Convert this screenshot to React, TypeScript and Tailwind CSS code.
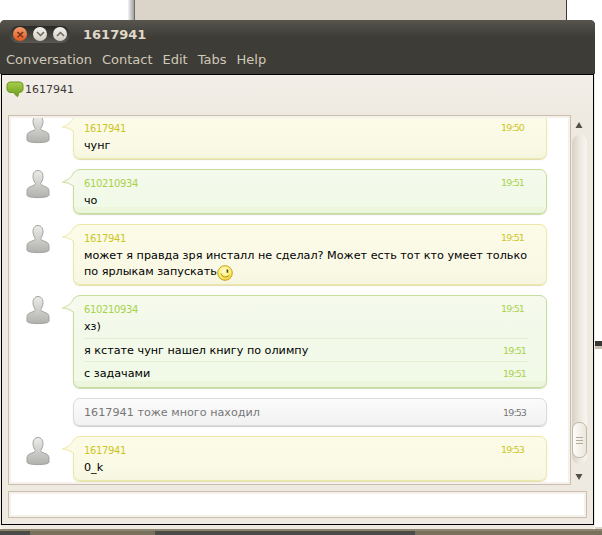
import type { ReactNode } from "react";

const sans = "font-['DejaVu_Sans',sans-serif]";

type Tone = "yellow" | "green";

const tones = {
  yellow: {
    box: "border-[#eee8a8] bg-[linear-gradient(#fbfbe8,#f9f9e6_70%,#f6f6e0)] shadow-[0_1px_1px_#e0dcae]",
    name: "text-[#cdc61f]",
    tailFill: "#fbfbe8",
    tailStroke: "#eee8a8",
  },
  green: {
    box: "border-[#c7dd9c] bg-[linear-gradient(#f5faec,#f1f9e7_calc(100%-6px),#ecf6dc_calc(100%-6px))] shadow-[0_1px_1px_#cdd8b4]",
    name: "text-[#a8d24c]",
    tailFill: "#f5faec",
    tailStroke: "#c7dd9c",
  },
};

function Avatar() {
  return (
    <svg width="26" height="30" viewBox="0 0 26 30" className="mt-px shrink-0">
      <defs>
        <linearGradient id="av" x1="0" y1="0" x2="0" y2="1">
          <stop offset="0" stopColor="#ecece9" />
          <stop offset="1" stopColor="#b0b0ac" />
        </linearGradient>
      </defs>
      <path
        d="M13 .5c3.200 0 5 2.600 5 6 0 3-1.200 5.400-2.400 7 .2 1.200 1.600 2 4 2.800 2.600.9 4.400 2 4.400 4.800V25c0 1-2 2.600-11 2.600S2 26 2 25v-3.900c0-2.800 1.800-3.900 4.400-4.800 2.400-.8 3.800-1.600 4-2.800C9.200 11.900 8 9.500 8 6.500c0-3.400 1.800-6 5-6z"
        fill="url(#av)"
        stroke="#a2a29e"
      />
    </svg>
  );
}

function Row({ tone, children }: { tone: Tone; children: ReactNode }) {
  const t = tones[tone];
  return (
    <div className="flex pl-[14px] pr-[21px]">
      <div className="w-[48px] shrink-0">
        <Avatar />
      </div>
      <div className={`relative flex-1 rounded-[7px] border pl-[10px] pr-[18px] pt-[4px] pb-[3px] ${t.box}`}>
        <svg width="13" height="20" viewBox="0 0 13 20" className="absolute left-[-12px] top-[-1px]">
          <path d="M13 2C11 7 7 11 .5 13c4 .5 8 1.500 12.500 5z" fill={t.tailFill} />
          <path d="M12 2.500C10.500 7 7 11 .5 13c4 .5 7.500 1.500 11.500 4.500" fill="none" stroke={t.tailStroke} />
        </svg>
        {children}
      </div>
    </div>
  );
}

function Line({ tone, name, time }: { tone: Tone; name: string; time: string }) {
  return (
    <div className={`flex h-[18px] items-center justify-between pr-[4px] ${tones[tone].name}`}>
      <span className="text-[10px] tracking-[-0.36px]">{name}</span>
      <span className="text-[9.5px] tracking-[-0.9px]">{time}</span>
    </div>
  );
}

function Smiley() {
  return (
    <svg width="16" height="16" viewBox="0 0 16 16" className="my-[-2px] inline-block align-[-4px]">
      <defs>
        <radialGradient id="sm" cx="0.45" cy="0.35" r="0.7">
          <stop offset="0" stopColor="#fffbd0" />
          <stop offset="0.7" stopColor="#fdec60" />
          <stop offset="1" stopColor="#eeb920" />
        </radialGradient>
      </defs>
      <circle cx="8" cy="8" r="7.300" fill="url(#sm)" stroke="#c9a024" />
      <rect x="9.600" y="4.500" width="1.600" height="3.200" fill="#4a4420" />
      <path d="M4 8.500c.5 3.500 5.500 5 8.500 1.500" fill="none" stroke="#9c8420" />
    </svg>
  );
}

function Extra({ text, time }: { text: string; time: string }) {
  return (
    <div className="flex h-[23px] items-center justify-between border-t border-[#e4eed4] pr-[2px] pt-[3px] text-black">
      <span>{text}</span>
      <span className="text-[9.5px] tracking-[-0.9px] text-[#a8d24c]">{time}</span>
    </div>
  );
}

export default function App() {
  return (
    <div className={`flex h-[535px] w-[602px] flex-col overflow-hidden bg-white ${sans}`}>
      <div className="flex h-[20px] shrink-0">
        <div className="w-[128px] bg-white" />
        <div className="w-[6px] bg-gradient-to-r from-[#f4f4f4] to-[#a0a0a0]" />
        <div className="w-[1px] bg-[#6e6a62]" />
        <div className="w-[431px] bg-[#dbd4c8]" />
        <div className="w-[1px] bg-[#3a3834]" />
      </div>

      <div className="relative flex h-[509px] w-[595px] shrink-0 flex-col rounded-t-[5px] rounded-b-[4px] bg-[#eee9e1]">
        <div className="absolute left-full top-[321px] h-[5px] w-[7px] bg-[#3a3834]" />
        <div className="absolute left-full top-[326px] h-[3px] w-[7px] bg-[#c9bfae]" />
        <div className="absolute bottom-0 left-full h-[2px] w-[7px] bg-[#dbd4c8]" />

        <div className="shrink-0 rounded-t-[5px] bg-[#3e3c37]">
          <div className="flex h-[28px] items-center rounded-t-[5px] bg-gradient-to-b from-[#57554e] to-[#3e3c37] to-60% pl-[10px]">
            <div className="flex h-[17px] w-[60px] items-center justify-between rounded-full bg-gradient-to-b from-[#2a2925] to-[#5b5952] px-[3px]">
              <div className="flex h-[14px] w-[14px] items-center justify-center rounded-full bg-gradient-to-b from-[#f49a6c] to-[#e2561c] text-[11px] font-bold leading-none text-[#6b2c14]">×</div>
              <div className="flex h-[14px] w-[14px] items-center justify-center rounded-full bg-gradient-to-b from-[#f6f4ef] to-[#d2cdc2]">
                <svg width="9" height="8" viewBox="0 0 9 8"><path d="M1 2l3.500 3.500L8 2" fill="none" stroke="#6a675f" strokeWidth="1.500" /></svg>
              </div>
              <div className="flex h-[14px] w-[14px] items-center justify-center rounded-full bg-gradient-to-b from-[#f6f4ef] to-[#d2cdc2]">
                <svg width="9" height="8" viewBox="0 0 9 8"><path d="M1 6l3.500-3.500L8 6" fill="none" stroke="#6a675f" strokeWidth="1.500" /></svg>
              </div>
            </div>
            <span className="ml-[13px] pt-px text-[13px] font-bold text-[#e0d9ca]">1617941</span>
          </div>

          <div className="flex h-[26px] items-start gap-[10px] pl-[6px] text-[13px] leading-[24px] text-[#cfc9b8]">
            <span>Conversation</span>
            <span>Contact</span>
            <span>Edit</span>
            <span>Tabs</span>
            <span>Help</span>
          </div>
        </div>

        <div className="mb-[4px] ml-px flex min-h-0 w-[593px] flex-1 flex-col border border-black bg-[#eee9e1] pl-[6px] pr-[6px]">
          <div className="-ml-[6px] -mr-[6px] flex h-[40px] shrink-0 items-start bg-gradient-to-b from-[#f3efe8] to-[#eee9e1] pl-[4px] pt-[6px] text-[11px] text-[#3c3a36]">
            <svg width="18" height="17" viewBox="0 0 18 17" className="mr-px">
              <defs>
                <linearGradient id="gb" x1="0" y1="0" x2="0" y2="1">
                  <stop offset="0" stopColor="#a6cf4a" />
                  <stop offset="1" stopColor="#6f9c1e" />
                </linearGradient>
              </defs>
              <path d="M5 1h8c2.500 0 4 1.200 4 3.500v3.500c0 2.300-1.500 3.500-4 3.500h-.5l-.5 3.500c-.2.700-.8.700-1.300.2L7.500 11.500H5C2.500 11.500 1 10.300 1 8V4.500C1 2.200 2.500 1 5 1z" fill="url(#gb)" stroke="#6b9420" />
            </svg>
            <span className="mt-px leading-[16px]">1617941</span>
          </div>

          <div className="flex h-[370px] shrink-0">
            <div className="flex w-[563px] shrink-0 flex-col border border-[#cabfae] bg-[#f5f2ec] p-[2px]">
              <div className="min-h-0 flex-1 overflow-hidden bg-white">
                <div className="-mt-[4px] flex flex-col gap-[10px] text-[11.2px] text-black">
                  <Row tone="yellow">
                    <Line tone="yellow" name="1617941" time="19:50" />
                    <div className="h-[18px] leading-[18px]">чунг</div>
                  </Row>
                  <Row tone="green">
                    <Line tone="green" name="610210934" time="19:51" />
                    <div className="h-[18px] leading-[18px]">чо</div>
                  </Row>
                  <Row tone="yellow">
                    <Line tone="yellow" name="1617941" time="19:51" />
                    <div className="pb-px pt-px leading-[16px]">
                      может я правда зря инсталл не сделал? Может есть тот кто умеет только по ярлыкам запускать
                      <Smiley />
                    </div>
                  </Row>
                  <Row tone="green">
                    <Line tone="green" name="610210934" time="19:51" />
                    <div className="h-[20px] leading-[18px]">хз)</div>
                    <Extra text="я кстате чунг нашел книгу по олимпу" time="19:51" />
                    <Extra text="с задачами" time="19:51" />
                  </Row>
                  <div className="ml-[62px] mr-[21px] flex h-[28px] items-center justify-between rounded-[7px] border border-[#dcdcdc] bg-gradient-to-b from-[#fbfbfb] to-[#f2f2f2] pl-[10px] pr-[20px] pt-[2px] text-[#777777] shadow-[0_1px_1px_#cccccc]">
                    <span>1617941 тоже много находил</span>
                    <span className="text-[9.5px] tracking-[-0.9px]">19:53</span>
                  </div>
                  <Row tone="yellow">
                    <Line tone="yellow" name="1617941" time="19:53" />
                    <div className="h-[18px] leading-[18px]">0_k</div>
                  </Row>
                </div>
              </div>
            </div>

            <div className="flex w-[16px] flex-col items-center pt-[6px]">
              <svg width="8" height="8" viewBox="0 0 8 8"><path d="M4 1l3.500 6H.5z" fill="#555046" /></svg>
              <div className="mt-[6px] flex w-[15px] flex-1 flex-col justify-end rounded-[8px] bg-gradient-to-r from-[#d8d0c3] via-[#ece7df] to-[#f8f6f2]">
                <div className="mb-[6px] flex h-[36px] w-[15px] flex-col items-center justify-center gap-[2px] rounded-[7px] border border-[#c2b8a6] bg-gradient-to-r from-[#fdfcfa] to-[#ece6dc]">
                  <div className="h-px w-[7px] bg-[#b3aa9a]" />
                  <div className="h-px w-[7px] bg-[#b3aa9a]" />
                  <div className="h-px w-[7px] bg-[#b3aa9a]" />
                </div>
              </div>
              <svg width="8" height="8" viewBox="0 0 8 8" className="mb-[4px] mt-[9px]"><path d="M4 7L.5 1h7z" fill="#555046" /></svg>
            </div>
          </div>

          <div className="mb-[6px] mt-[6px] h-[27px] shrink-0 border border-[#cabfae] bg-[#f5f2ec] p-[2px]">
            <div className="h-full bg-white" />
          </div>
        </div>
      </div>

      <div className="h-[2px] shrink-0 bg-[#8d8470]" />
      <div className="flex flex-1">
        <div className="w-[30px] bg-[#4b4b47]" />
        <div className="w-[125px] bg-[#7a705e]" />
        <div className="w-[260px] bg-[#4b4b47]" />
        <div className="flex-1 bg-[#7a705e]" />
      </div>
    </div>
  );
}
